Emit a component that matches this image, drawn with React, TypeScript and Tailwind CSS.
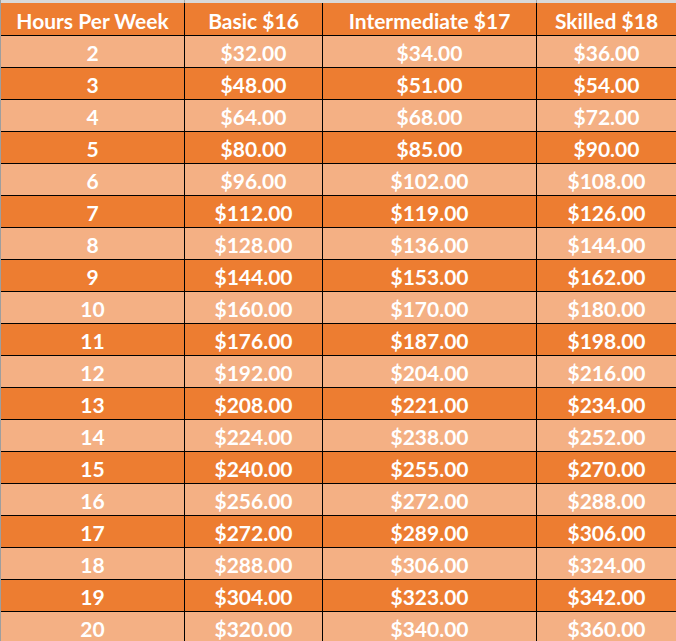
const rates = [16, 17, 18];
const hours = Array.from({ length: 19 }, (_, i) => i + 2);

const money = (n: number) => `$${n.toFixed(2)}`;

const cell = 'flex items-center justify-center pt-[2px] border-r border-black';
const last = 'flex items-center justify-center pt-[2px]';

export default function App() {
  return (
    <div className="w-[676px] h-[641px] overflow-hidden bg-white font-['Lato',sans-serif] font-bold text-white text-[21px] leading-none">
      <div className="grid grid-cols-[1px_184px_138px_214px_1fr] h-[3px] bg-[#d9d9d9]">
        <div className="bg-[#9e9e9e]" />
        <div className="border-r border-[#a6a6a6]" />
        <div className="border-r border-[#d9d9d9]" />
        <div className="border-r border-[#a6a6a6]" />
        <div />
      </div>
      <div className="border-l border-[#9e9e9e]">
        <div className="grid grid-cols-[184px_138px_214px_1fr] h-[33px] bg-[#ed7d31] border-b border-black">
          <div className={cell}>Hours Per Week</div>
          <div className={cell}>Basic $16</div>
          <div className={cell}>Intermediate $17</div>
          <div className={last}>Skilled $18</div>
        </div>
        {hours.map((h, i) => (
          <div
            key={h}
            className={`grid grid-cols-[184px_138px_214px_1fr] h-[32px] border-b border-black ${
              i % 2 === 0 ? 'bg-[#f4b084]' : 'bg-[#ed7d31]'
            }`}
          >
            <div className={cell}>{h}</div>
            <div className={cell}>{money(h * rates[0])}</div>
            <div className={cell}>{money(h * rates[1])}</div>
            <div className={last}>{money(h * rates[2])}</div>
          </div>
        ))}
      </div>
    </div>
  );
}
